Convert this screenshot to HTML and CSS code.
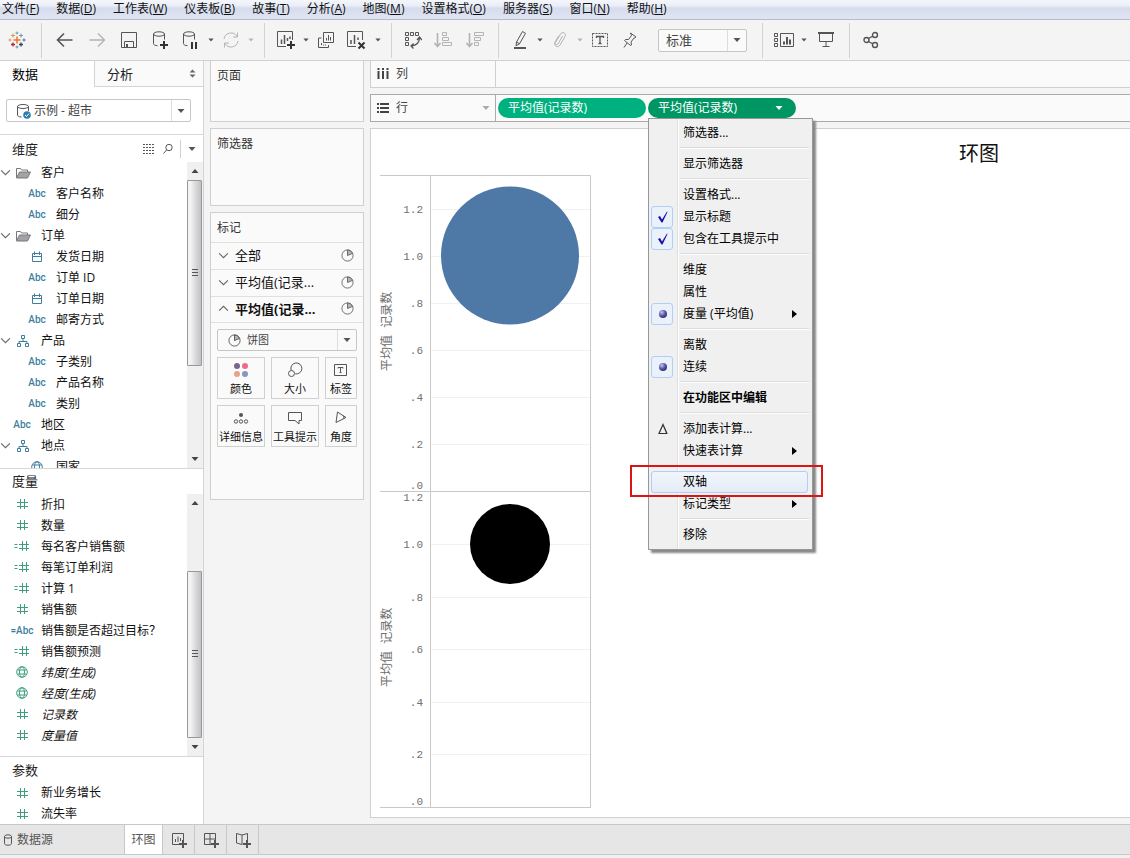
FILE: index.html
```html
<!DOCTYPE html>
<html lang="zh-CN">
<head>
<meta charset="utf-8">
<meta name="viewport" content="width=device-width, initial-scale=1">
<title>环图</title>
<link rel="stylesheet" href="styles.css">
</head>
<body>
<svg class="defs" aria-hidden="true">
  <symbol id="caret" viewBox="0 0 8 8"><path d="M.500 2h7L4 6z" fill="currentColor" stroke="none"/></symbol>
  <symbol id="up" viewBox="0 0 8 8"><path d="M.500 6h7L4 2z" fill="currentColor" stroke="none"/></symbol>
  <symbol id="chev" viewBox="0 0 10 10"><path d="M1 3l4 4 4-4"/></symbol>
  <symbol id="chevup" viewBox="0 0 10 10"><path d="M1 7l4-4 4 4"/></symbol>
  <symbol id="folder" viewBox="0 0 16 12"><path d="M1.500 10.500v-9h4l1 1.500h6v2"/><path d="M1.500 11l3-6h11l-3 6z" fill="#a0a4a8"/></symbol>
  <symbol id="cal" viewBox="0 0 12 12"><path d="M1.500 2.500h9v8h-9zM1.500 5.500h9M3.500 .500v3.500M8.500 .500v3.500"/></symbol>
  <symbol id="hier" viewBox="0 0 12 12"><path d="M4.500 .500h3v3h-3zM.500 8.500h3v3h-3zM8.500 8.500h3v3h-3zM6 3.500v3M2 8.500v-2h8v2"/></symbol>
  <symbol id="globe" viewBox="0 0 12 12"><circle cx="6" cy="6" r="5.300"/><ellipse cx="6" cy="6" rx="2.500" ry="5.300"/><path d="M1.500 4h9M1.500 8h9"/></symbol>
  <symbol id="hash" viewBox="0 0 12 12"><path d="M4.500 1v10M8.500 1v10M1 4.500h11M1 8.500h11"/></symbol>
  <symbol id="calchash" viewBox="0 0 16 12"><path d="M8.500 1v10M12.500 1v10M5 4.500h10M5 8.500h10M.500 4.500h3M.500 7.500h3"/></symbol>
  <symbol id="db" viewBox="0 0 16 18"><ellipse cx="7" cy="4.500" rx="5.500" ry="2"/><path d="M1.500 4.500V13c0 1.200 1.500 2 4 2M12.500 4.500V9"/></symbol>
  <symbol id="pie" viewBox="0 0 14 14"><circle cx="7" cy="7" r="6"/><path d="M7 7V1A6 6 0 0 1 12.500 4.700z" fill="#b5b5b5"/></symbol>
  <symbol id="grip" viewBox="0 0 8 10"><path d="M1 1.500h6M1 4.500h6M1 7.500h6"/></symbol>
</svg>
<div class="app">
  <nav class="menubar">
    <button>文件(<u>F</u>)</button><button>数据(<u>D</u>)</button><button>工作表(<u>W</u>)</button><button>仪表板(<u>B</u>)</button><button>故事(<u>T</u>)</button><button>分析(<u>A</u>)</button><button>地图(<u>M</u>)</button><button>设置格式(<u>O</u>)</button><button>服务器(<u>S</u>)</button><button>窗口(<u>N</u>)</button><button>帮助(<u>H</u>)</button>
  </nav>

  <div class="toolbar" role="toolbar" aria-label="工具栏">
    <button class="tool logo" aria-label="开始"><svg width="18" height="18" viewBox="0 0 18 18"><path d="M9 5.500v7M5.500 9h7" stroke="#e8762d" stroke-width="1.500"/><path d="M5 2.500v4M3 4.500h4" stroke="#c8a04a"/><path d="M13 2.500v4M11 4.500h4" stroke="#6a9aa8"/><path d="M5 11.500v4M3 13.500h4" stroke="#c72035" stroke-width="1.300"/><path d="M13 11.500v4M11 13.500h4" stroke="#2b4a6f" stroke-width="1.300"/><path d="M9 .500v3M7.500 2h3M9 14.500v3M7.500 16h3" stroke="#7199a6"/><path d="M2 7.500v3M.500 9h3" stroke="#e0907a"/><path d="M16 7.500v3M14.500 9h3" stroke="#5b6591"/></svg></button>
    <span class="sep"></span>
    <button class="tool wide" aria-label="后退"><svg width="20" height="18" viewBox="0 0 20 18"><path d="M2.500 9h15M9 2.500L2.500 9 9 15.500" stroke-width="1.600"/></svg></button>
    <button class="tool wide" aria-label="前进" disabled><svg width="20" height="18" viewBox="0 0 20 18"><path d="M2.500 9h15M11 2.500L17.500 9 11 15.500" stroke-width="1.400"/></svg></button>
    <button class="tool wide" aria-label="保存"><svg width="18" height="18" viewBox="0 0 18 18"><path d="M1.500 1.500h15v15h-15zM4.500 16v-5.500h9V16"/><path d="M6 13h2v3H6z" fill="currentColor" stroke="none"/></svg></button>
    <button class="tool wide" aria-label="新建数据源"><svg width="18" height="20" viewBox="0 0 18 20"><ellipse cx="7" cy="4" rx="5.500" ry="2.200"/><path d="M1.500 4v9.500c0 1.300 1.500 2 4 2.200M12.500 4v5.500"/><path class="heavy" d="M12 11v8M8 15h8"/></svg></button>
    <button class="tool" aria-label="暂停自动更新"><svg width="18" height="20" viewBox="0 0 18 20"><ellipse cx="7" cy="4" rx="5.500" ry="2.200"/><path d="M1.500 4v9.500c0 1.300 1.500 2 4 2.200M12.500 4v5.500"/><path class="heavy" d="M10 12v7M14 12v7"/></svg></button>
    <button class="drop" aria-label="更新选项"><svg width="6" height="6"><use href="#caret"/></svg></button>
    <button class="tool" aria-label="刷新" disabled><svg width="18" height="18" viewBox="0 0 18 18"><path d="M2 8a7 7 0 0 1 13-2.500M16 10a7 7 0 0 1-13 2.500M15.500 1.500v4.500H11M2.500 16.500V12H7"/></svg></button>
    <button class="drop" aria-label="刷新选项" disabled><svg width="6" height="6"><use href="#caret"/></svg></button>
    <span class="sep"></span>
    <button class="tool" aria-label="新建工作表"><svg width="20" height="20" viewBox="0 0 20 20"><path d="M10 16.500H1.500v-15h15V10"/><path d="M5.500 14V9.500M8.500 14V5M11.500 11V8M14 9V6.500" stroke-width="1.500"/><path class="heavy" d="M15 11v8M11 15h8"/></svg></button>
    <button class="drop" aria-label="新建选项"><svg width="6" height="6"><use href="#caret"/></svg></button>
    <button class="tool" aria-label="复制"><svg width="18" height="18" viewBox="0 0 18 18"><path d="M6.500 1.500h10v10h-10zM4.500 7h-3v9.500h10V14M9.500 9.500V7M11.500 9.500V4M13.500 9.500V6M4.500 14v-2M6.500 14.500v-1M8.500 14.500v-1"/></svg></button>
    <button class="tool wide" aria-label="清除工作表"><svg width="20" height="20" viewBox="0 0 20 20"><path d="M10 16.500H1.500v-15h15V10"/><path d="M5 14v-4M8.500 14V5M12 10V7.500" stroke-width="1.500"/><path class="heavy" d="M12.500 12.500l6 6M18.500 12.500l-6 6"/></svg></button>
    <button class="drop" aria-label="清除选项"><svg width="6" height="6"><use href="#caret"/></svg></button>
    <span class="sep"></span>
    <button class="tool" aria-label="交换行和列"><svg width="18" height="20" viewBox="0 0 18 20"><path d="M1.500 2.500h3v3h-3zM6.500 2.500h3v3h-3zM11.500 2.500h3v3h-3zM1.500 7.500h3v3h-3zM1.500 12.500h3v3h-3z"/><path d="M15.500 7.500c0 5-3 8-8.500 8.500M13 10l2.500-3L18 10M9.500 13.500L7 16l2.500 2.500" stroke-width="1.300"/></svg></button>
    <button class="tool wide" aria-label="升序排序" disabled><svg width="20" height="18" viewBox="0 0 20 18"><path d="M4.500 2v13M1.500 12l3 3.500 3-3.500" stroke-width="1.600"/><path d="M9.500 1.500h4v3h-4zM9.500 6.500h6v3h-6zM9.500 11.500h9v3h-9z"/></svg></button>
    <button class="tool wide" aria-label="降序排序" disabled><svg width="20" height="18" viewBox="0 0 20 18"><path d="M4.500 2v13M1.500 12l3 3.500 3-3.500" stroke-width="1.600"/><path d="M9.500 1.500h9v3h-9zM9.500 6.500h6v3h-6zM9.500 11.500h4v3h-4z"/></svg></button>
    <span class="sep"></span>
    <button class="tool" aria-label="突出显示"><svg width="14" height="20" viewBox="0 0 14 20"><path d="M3.500 12l6-10.500 3 1.800-6 10.500-3.500 2zM3.500 12l3 1.800"/><path d="M1 18h12" stroke-width="2"/></svg></button>
    <button class="drop" aria-label="突出显示选项"><svg width="6" height="6"><use href="#caret"/></svg></button>
    <button class="tool" aria-label="分组" disabled><svg width="14" height="18" viewBox="0 0 14 18"><path d="M9.500 5l-4.500 8c-1 1.800-3.500.500-2.500-1.500L7.500 3c1.800-3 6-1 4.500 2.500l-5 8.500c-2 3.500-7 1-5-3l3.500-6"/></svg></button>
    <button class="drop" aria-label="分组选项" disabled><svg width="6" height="6"><use href="#caret"/></svg></button>
    <button class="tool" aria-label="显示标记标签"><svg width="18" height="16" viewBox="0 0 18 16"><path d="M1.500 1.500h15v13h-15z" stroke-dasharray="2 1"/><path d="M5.500 6V4.500h7V6M9 4.500v7M7.500 11.500h3" stroke-width="1.300"/></svg></button>
    <button class="tool wide" aria-label="固定轴"><svg width="16" height="18" viewBox="0 0 16 18"><path d="M8.500 2l5.500 4-1.500 1h-.500l-3 4 .500 3-1 .500-6-5 1-1h3l3-4zM5 12l-3 4.500"/></svg></button>
    <span class="combo fit"><select aria-label="适合"><option>标准</option></select><svg width="8" height="8"><use href="#caret"/></svg></span>
    <span class="sep"></span>
    <button class="tool" aria-label="显示/隐藏卡"><svg width="20" height="16" viewBox="0 0 20 16"><path d="M.500 1.500h3v3h-3zM.500 6.500h3v3h-3zM.500 11.500h3v3h-3zM6.500 1.500h13v13h-13z"/><path d="M10 12.500V9.500M13 12.500V5M16 12.500V7.500" stroke-width="2"/></svg></button>
    <button class="drop" aria-label="卡选项"><svg width="6" height="6"><use href="#caret"/></svg></button>
    <button class="tool wide" aria-label="演示模式"><svg width="18" height="18" viewBox="0 0 18 18"><path d="M1 2h16" stroke-width="2"/><path d="M2.500 3v7.500h13V3M9 10.500v5M5.500 15.500h7"/></svg></button>
    <span class="sep"></span>
    <button class="tool" aria-label="共享"><svg width="16" height="18" viewBox="0 0 16 18"><g stroke-width="1.400"><circle cx="3.500" cy="9" r="2.500"/><circle cx="12" cy="4" r="2.500"/><circle cx="12" cy="14" r="2.500"/><path d="M5.500 7.500L10 5M5.500 10.500L10 13"/></g></svg></button>
  </div>

  <main class="work">
    <aside class="data">
      <div class="tabs"><button class="tab on">数据</button><button class="tab">分析<svg width="7" height="9" viewBox="0 0 7 9"><path d="M.500 3.500h6L3.500 .500zM.500 5.500h6l-3 3z" fill="#666" stroke="none"/></svg></button></div>
      <div class="source">
        <span class="combo src"><svg class="lead" width="16" height="18" viewBox="0 0 16 18"><use href="#db"/><circle cx="11" cy="13" r="3.800" fill="#2f7fae" stroke="none"/><path d="M9 13l1.500 1.500 2.500-3" stroke="#fff"/></svg><select aria-label="数据源"><option>示例 - 超市</option></select><svg width="8" height="8"><use href="#caret"/></svg></span>
      </div>
      <section class="pane dims">
        <header><h2>维度</h2>
          <button aria-label="列表视图"><svg width="12" height="12" viewBox="0 0 12 12"><path d="M0 1.500h12M0 4.500h12M0 7.500h12M0 10.500h12" stroke-dasharray="2 1"/></svg></button>
          <button aria-label="查找"><svg width="12" height="12" viewBox="0 0 12 12"><circle cx="7" cy="4.500" r="3.200"/><path d="M4.500 7L1.500 10.500"/></svg></button>
          <button class="more" aria-label="更多"><svg width="8" height="8"><use href="#caret"/></svg></button></header>
        <div class="scroll">
          <ul class="fields">
            <li class="top"><svg class="tw"><use href="#chev"/></svg><svg class="ico"><use href="#folder"/></svg>客户</li>
            <li class="sub"><i>Abc</i>客户名称</li>
            <li class="sub"><i>Abc</i>细分</li>
            <li class="top"><svg class="tw"><use href="#chev"/></svg><svg class="ico"><use href="#folder"/></svg>订单</li>
            <li class="sub"><svg class="ico blue"><use href="#cal"/></svg>发货日期</li>
            <li class="sub"><i>Abc</i>订单 ID</li>
            <li class="sub"><svg class="ico blue"><use href="#cal"/></svg>订单日期</li>
            <li class="sub"><i>Abc</i>邮寄方式</li>
            <li class="top"><svg class="tw"><use href="#chev"/></svg><svg class="ico blue"><use href="#hier"/></svg>产品</li>
            <li class="sub"><i>Abc</i>子类别</li>
            <li class="sub"><i>Abc</i>产品名称</li>
            <li class="sub"><i>Abc</i>类别</li>
            <li><i>Abc</i>地区</li>
            <li class="top"><svg class="tw"><use href="#chev"/></svg><svg class="ico blue"><use href="#hier"/></svg>地点</li>
            <li class="sub"><svg class="ico blue"><use href="#globe"/></svg>国家</li>
          </ul>
          <div class="bar"><button aria-label="向上滚动"><svg width="8" height="8"><use href="#up"/></svg></button><div class="track"><div class="thumb"><svg width="8" height="10"><use href="#grip"/></svg></div></div><button aria-label="向下滚动"><svg width="8" height="8"><use href="#caret"/></svg></button></div>
        </div>
      </section>
      <section class="pane meas">
        <header><h2>度量</h2></header>
        <div class="scroll">
          <ul class="fields">
            <li><svg class="ico green"><use href="#hash"/></svg>折扣</li>
            <li><svg class="ico green"><use href="#hash"/></svg>数量</li>
            <li><svg class="ico green"><use href="#calchash"/></svg>每名客户销售额</li>
            <li><svg class="ico green"><use href="#calchash"/></svg>每笔订单利润</li>
            <li><svg class="ico green"><use href="#calchash"/></svg>计算 1</li>
            <li><svg class="ico green"><use href="#hash"/></svg>销售额</li>
            <li><i>=Abc</i>销售额是否超过目标？</li>
            <li><svg class="ico green"><use href="#calchash"/></svg>销售额预测</li>
            <li class="gen"><svg class="ico green"><use href="#globe"/></svg>纬度(生成)</li>
            <li class="gen"><svg class="ico green"><use href="#globe"/></svg>经度(生成)</li>
            <li class="gen"><svg class="ico green"><use href="#hash"/></svg>记录数</li>
            <li class="gen"><svg class="ico green"><use href="#hash"/></svg>度量值</li>
          </ul>
          <div class="bar"><button aria-label="向上滚动"><svg width="8" height="8"><use href="#up"/></svg></button><div class="track end"><div class="thumb"><svg width="8" height="10"><use href="#grip"/></svg></div></div><button aria-label="向下滚动"><svg width="8" height="8"><use href="#caret"/></svg></button></div>
        </div>
      </section>
      <section class="pane">
        <header><h2>参数</h2></header>
        <ul class="fields">
          <li><svg class="ico green"><use href="#hash"/></svg>新业务增长</li>
          <li><svg class="ico green"><use href="#hash"/></svg>流失率</li>
        </ul>
      </section>
    </aside>

    <div class="cards">
      <section class="card pages"><h3>页面</h3></section>
      <section class="card filters"><h3>筛选器</h3></section>
      <section class="card marks"><h3>标记</h3>
        <button class="layer"><svg class="tw"><use href="#chev"/></svg><span>全部</span><svg width="13" height="13"><use href="#pie"/></svg></button>
        <button class="layer"><svg class="tw"><use href="#chev"/></svg><span>平均值(记录...</span><svg width="13" height="13"><use href="#pie"/></svg></button>
        <button class="layer on"><svg class="tw"><use href="#chevup"/></svg><span>平均值(记录...</span><svg width="13" height="13"><use href="#pie"/></svg></button>
        <div class="encode">
          <span class="combo mark"><svg class="lead" width="13" height="13"><use href="#pie"/></svg><select aria-label="标记类型"><option>饼图</option></select><svg width="8" height="8"><use href="#caret"/></svg></span>
          <button><svg width="16" height="16" viewBox="0 0 16 16"><g stroke="none"><circle cx="4" cy="4" r="3" fill="#7b6391"/><circle cx="12" cy="4" r="3" fill="#ee6a85"/><circle cx="4" cy="12" r="3" fill="#eba183"/><circle cx="12" cy="12" r="3" fill="#8795c4"/></g></svg>颜色</button>
          <button><svg width="16" height="16" viewBox="0 0 16 16"><path d="M4.200 8.300a5.500 5.500 0 1 1 4 3.500"/><circle cx="4.500" cy="11.500" r="3"/></svg>大小</button>
          <button><svg width="16" height="16" viewBox="0 0 16 16"><path d="M1.500 2.500h12v11h-12zM5 6.500V5.500h5v1M7.500 5.500v5M6.500 10.500h2"/></svg>标签</button>
          <button><svg width="16" height="16" viewBox="0 0 16 16"><circle cx="8" cy="5" r="2" fill="currentColor" stroke="none"/><circle cx="3" cy="11.500" r="1.700"/><circle cx="8" cy="11.500" r="1.700"/><circle cx="13" cy="11.500" r="1.700"/></svg>详细信息</button>
          <button><svg width="16" height="16" viewBox="0 0 16 16"><path d="M1.500 2.500h13v8h-2.500v3.500l-4-3.500H1.500z"/></svg>工具提示</button>
          <button><svg width="16" height="16" viewBox="0 0 16 16"><path d="M4.500 2L13 7.500 3 12.500zM10 5.500c1 1 1 2.500.500 3.500"/></svg>角度</button>
        </div>
      </section>
    </div>

    <div class="sheet">
      <div class="shelf"><div class="name"><svg width="12" height="12" viewBox="0 0 12 12"><path d="M1.500 0v11M6 0v11M10.500 0v11" stroke-width="2" stroke-dasharray="2 1 8"/></svg>列</div></div>
      <div class="shelf rows"><div class="name"><svg width="12" height="12" viewBox="0 0 12 12"><path d="M0 2h12M0 6h12M0 10h12" stroke-width="2" stroke-dasharray="2 1 9"/></svg>行<svg class="tail" width="8" height="8"><use href="#caret"/></svg></div>
        <div class="pills">
          <button class="pill">平均值(记录数)</button>
          <div class="anchor">
            <button class="pill open">平均值(记录数)<svg width="8" height="8"><use href="#caret"/></svg></button>
            <div class="menu" role="menu">
              <button class="item">筛选器...</button><hr>
              <button class="item">显示筛选器</button><hr>
              <button class="item">设置格式...</button>
              <label class="item"><input type="checkbox" checked><svg class="tick" width="12" height="12" viewBox="0 0 12 12"><path d="M1 6l2-1 2 3.500L10 .500l.500.500L5.500 11.500H4.500z" fill="#1414a8" stroke="none"/></svg>显示标题</label>
              <label class="item"><input type="checkbox" checked><svg class="tick" width="12" height="12" viewBox="0 0 12 12"><path d="M1 6l2-1 2 3.500L10 .500l.500.500L5.500 11.500H4.500z" fill="#1414a8" stroke="none"/></svg>包含在工具提示中</label><hr>
              <button class="item">维度</button>
              <button class="item">属性</button>
              <label class="item"><input type="radio" name="role" checked><span class="dot"></span>度量 (平均值)<span class="more"></span></label><hr>
              <button class="item">离散</button>
              <label class="item"><input type="radio" name="kind" checked><span class="dot"></span>连续</label><hr>
              <button class="item strong">在功能区中编辑</button><hr>
              <button class="item"><svg class="tick" width="12" height="12" viewBox="0 0 12 12"><path d="M6 1.500l3.800 9H2zM6 1.500l4 9" stroke="#333" stroke-width="1.200"/></svg>添加表计算...</button>
              <button class="item">快速表计算<span class="more"></span></button><hr>
              <button class="item hot">双轴<span class="callout"></span></button>
              <button class="item">标记类型<span class="more"></span></button><hr>
              <button class="item">移除</button>
            </div>
          </div>
        </div>
      </div>
      <div class="view">
        <svg class="chart" width="212" height="634" viewBox="0 0 212 634" role="img" aria-label="平均值 记录数">
          <path class="grid" d="M51 34.500h159M51 81.500h159M51 128.500h159M51 175.500h159M51 222.500h159M51 269.500h159M51 369.500h159M51 422.500h159M51 474.500h159M51 527.500h159M51 579.500h159"/>
          <path class="frame" d="M0 .500h210.500v632M0 316.500h210M0 632.500h210.500M50.500 .500v632"/>
          <circle cx="130" cy="80.500" r="69" fill="#4e79a7"/>
          <circle cx="130" cy="369" r="40"/>
          <g class="ticks"><text x="43" y="38">1.2</text><text x="43" y="85">1.0</text><text x="43" y="132">.8</text><text x="43" y="179">.6</text><text x="43" y="226">.4</text><text x="43" y="273">.2</text><text x="43" y="314">.0</text><text x="43" y="326">1.2</text><text x="43" y="373">1.0</text><text x="43" y="426">.8</text><text x="43" y="478">.6</text><text x="43" y="531">.4</text><text x="43" y="583">.2</text><text x="43" y="630">.0</text></g>
          <g class="axis"><text transform="translate(11 196) rotate(-90)">平均值 记录数</text><text transform="translate(11 512) rotate(-90)">平均值 记录数</text></g>
        </svg>
        <h1>环图</h1>
      </div>
    </div>
  </main>

  <nav class="sheets">
    <button class="ds"><svg width="10" height="12" viewBox="0 0 10 12"><ellipse cx="5" cy="2.500" rx="3.500" ry="1.700"/><path d="M1.500 2.500v7c0 2.300 7 2.300 7 0v-7"/></svg>数据源</button>
    <button class="cur">环图</button>
    <button aria-label="新建工作表"><svg width="16" height="16" viewBox="0 0 16 16"><path d="M8 12.500H1.500v-11h11V8M4.500 10V7M7 10V4.500M9.500 9V6"/><path d="M12 8v8M8 12h8" stroke-width="2"/></svg></button>
    <button aria-label="新建仪表板"><svg width="16" height="16" viewBox="0 0 16 16"><path d="M8 12.500H1.500v-11h11V8M1.500 7h11M7 1.500v11"/><path d="M12 8v8M8 12h8" stroke-width="2"/></svg></button>
    <button aria-label="新建故事"><svg width="16" height="16" viewBox="0 0 16 16"><path d="M7 12.500l-5.500-1.500V1.500L7 3l5.500-1.500V8M7 3v9.500"/><path d="M12 8v8M8 12h8" stroke-width="2"/></svg></button>
  </nav>
  <footer class="status"></footer>
</div>
</body>
</html>
```
FILE: styles.css
```css
* { box-sizing: border-box; }
body, h1, h2, h3, ul, header { margin: 0; padding: 0; }
body, button, select {
  font-family: "Open Sans", "Noto Sans CJK SC", sans-serif;
  font-size: 12px;
  line-height: 20px;
  color: #222;
  text-spacing-trim: space-all;
}
button, select { margin: 0; padding: 0; border: 0; background: none; border-radius: 0; white-space: nowrap; }
h1, h2, h3 { font-weight: 400; }
ul { list-style: none; }
svg { fill: none; stroke: currentColor; flex: none; display: block; }
.defs { position: absolute; width: 0; height: 0; }

.app { display: flex; flex-direction: column; height: 100vh; overflow: hidden; background: #f4f4f4; }

.menubar {
  display: flex; flex: none; gap: 17px; height: 20px; padding-left: 2px;
  border-bottom: 1px solid #b4bacb;
  background: linear-gradient(#f4f6fb 0, #e9edf6 6px, #d6dcec 8px, #e0e4f3 19px);
}
.menubar button { height: 18px; line-height: 18px; color: #111; }

.toolbar { display: flex; flex: none; align-items: center; height: 41px; border-bottom: 1px solid #d0d0d0; color: #555; }
.tool, .drop { display: flex; align-items: center; justify-content: center; width: 28px; height: 32px; color: #555; }
.tool.wide { width: 32px; }
.tool.logo { width: 34px; }
.drop { width: 12px; }
.tool:disabled, .drop:disabled { color: #b4b4b4; }
.heavy { stroke: #333; stroke-width: 2; }
.sep { width: 1px; height: 35px; margin: 0 7px; background: #d2d2d2; flex: none; }

.combo { display: grid; grid-template-columns: 1fr 18px; align-items: center; border: 1px solid #c6c6c6; border-radius: 2px; background: #fafafa; color: #555; }
.combo > * { grid-row: 1; }
.combo select { grid-column: 1 / 3; width: 100%; height: 100%; appearance: none; color: #444; background: linear-gradient(#ddd, #ddd) right 18px top / 1px 100% no-repeat; }
.combo > svg:last-child { grid-column: 2; justify-self: center; pointer-events: none; }
.combo .lead { grid-column: 1; pointer-events: none; }
.fit { width: 89px; height: 23px; margin: 0 8px 0 12px; }
.fit select { padding-left: 7px; font-size: 13px; }

.work { display: flex; flex: 1; min-height: 0; gap: 6px; }

.data { display: flex; flex: none; flex-direction: column; width: 204px; border-right: 1px solid #d4d4d4; background: #fff; }
.tabs { display: flex; height: 26px; flex: none; }
.tab { display: flex; align-items: center; justify-content: space-between; flex: 1; padding: 0 7px 0 12px; border: solid #d4d4d4; border-width: 0 0 1px 1px; background: #fafafa; font-size: 13px; }
.tab.on { flex: 0 0 94px; border: 0; background: #fff; color: #000; }
.source { padding: 12px 12px 12px 6px; flex: none; }
.src { height: 23px; background: #fff; }
.src .lead { margin-left: 9px; }
.src select { padding-left: 27px; color: #444; }
.pane { display: flex; flex-direction: column; border-top: 1px solid #d8d8d8; }
.pane header { display: flex; align-items: center; height: 25px; padding-left: 12px; flex: none; }
.pane h2 { flex: 1; font-size: 13px; }
.pane header button { display: grid; place-items: center; width: 19px; height: 18px; color: #555; }
.pane header .more { width: 23px; margin-left: 3px; border-left: 1px solid #d0d0d0; }
.dims { flex: 334 1 0; min-height: 0; }
.dims header { height: 27px; }
.meas { flex: 288 1 0; min-height: 0; }
.scroll { display: flex; flex: 1; min-height: 0; overflow: hidden; }
.fields { flex: 1; }
.fields li { display: grid; grid-template-columns: 34px 1fr; column-gap: 2px; align-items: center; height: 21px; padding: 0 4px 0 5px; line-height: 21px; white-space: nowrap; color: #111; }
.fields li.top { grid-template-columns: 11px 24px 1fr; padding-left: 0; column-gap: 3px; }
.fields li.sub { padding-left: 20px; }
.fields .ico { width: 16px; height: 12px; justify-self: center; }
.fields .top .ico { justify-self: start; }
.fields .top .ico { margin-left: 1px; }
.fields i { justify-self: center; font: 500 10px/21px Roboto, sans-serif; color: #3e7f9f; }
.tw { width: 11px; height: 11px; color: #666; }
.ico { color: #777; }
.ico.blue { color: #3e7f9f; }
.ico.green { color: #3f9e80; }
.gen { font-style: italic; }

.bar { display: flex; flex: none; flex-direction: column; width: 16px; background: #f0f0f0; }
.bar button { display: grid; place-items: center; width: 16px; height: 18px; color: #444; }
.track { display: flex; flex: 1; flex-direction: column; min-height: 0; }
.track.end { justify-content: flex-end; }
.thumb { display: grid; place-items: center; height: 69%; width: 15px; border: 1px solid #989898; border-radius: 1px; background: linear-gradient(90deg, #f4f4f4 20%, #dedee0 50%, #c2c2c6); color: #555; }
.end .thumb { height: 74%; }

.cards { display: flex; flex: none; flex-direction: column; gap: 6px; width: 154px; margin-top: -1px; }
.card { border: 1px solid #d0d0d0; background: #fafafa; }
.card h3 { height: 29px; padding-left: 6px; font-size: 12px; line-height: 29px; color: #333; }
.pages { height: 62px; }
.filters { height: 78px; }
.marks { min-height: 288px; }
.layer { display: flex; align-items: center; gap: 6px; width: 100%; height: 27px; padding: 0 9px 2px 7px; border-top: 1px solid #e0e0e0; font-size: 13px; color: #111; text-align: left; }
.layer span { flex: 1; }
.layer > svg { color: #666; }
.layer.on { height: 26px; font-weight: 700; }
.encode { display: grid; grid-template-columns: 48fr 48fr 32fr; gap: 6px; padding: 6px; border-top: 1px solid #e0e0e0; }
.encode > button { display: flex; flex-direction: column; align-items: center; justify-content: space-between; height: 42px; padding-top: 4px; border: 1px solid #d0d0d0; font-size: 11px; line-height: 18px; color: #111; }
.encode > button svg { color: #555; }
.mark { grid-column: 1 / 4; height: 22px; }
.mark .lead { margin-left: 10px; }
.mark select { padding-left: 29px; font-size: 11px; }

.sheet { display: flex; flex: 1; flex-direction: column; gap: 6px; min-width: 0; margin-top: -1px; padding-bottom: 6px; }
.shelf { display: flex; flex: none; height: 28px; border: 1px solid #d0d0d0; border-right: 0; background: #fafafa; }
.shelf.rows { border-color: #aaa; }
.name { display: flex; align-items: center; gap: 7px; width: 125px; padding: 0 6px; border-right: 1px solid #d0d0d0; color: #444; }
.rows .name { border-color: #aaa; }
.name .tail { margin-left: auto; margin-right: -1px; color: #aaa; }
.pills { display: flex; gap: 2px; align-items: center; padding-left: 2px; }
.anchor { position: relative; }
.pill { display: flex; align-items: center; justify-content: space-between; width: 148px; height: 20px; padding: 0 13px 0 10px; border-radius: 10px; background: #00b180; color: #fff; }
.pill.open { background: #009664; }

.menu { position: absolute; z-index: 2; top: 100%; left: 0; width: 165px; padding: 3px 2px; border: 1px solid #979797; background: linear-gradient(90deg, #f0f0f0 28px, #dfdfdf 28px, #dfdfdf 29px, #fff 29px, #fff 30px, #f0f0f0 30px); box-shadow: 3px 3px 2px #888; }
.item { position: relative; display: grid; grid-template: 20px / 21px 1fr auto; column-gap: 10px; align-items: center; width: 157px; height: 22px; line-height: 22px; border: 1px solid transparent; color: #000; text-align: left; white-space: nowrap; }
.item::before { content: ""; grid-area: 1 / 1; }
.item input { grid-area: 1 / 1; appearance: none; width: 22px; height: 22px; margin: 0 0 0 -1px; border: 1px solid #aecff7; border-radius: 3px; background: #eaf1fb; }
.tick, .dot { grid-area: 1 / 1; justify-self: center; position: relative; }
.dot { width: 8px; height: 8px; border-radius: 50%; background: radial-gradient(circle at 35% 30%, #c4c4f0, #4a4a9c 50%, #22225c); }
.item .more { border: solid transparent; border-width: 4px 0 4px 5px; border-left-color: #000; margin-right: 10px; }
.strong { font-weight: 700; }
.hot { border-color: #aecff7; border-radius: 3px; background: linear-gradient(#f2f5fa, #e4ecf7); }
.callout { position: absolute; z-index: 3; inset: -7px -16px -5px -22px; border: 2px solid #dc1414; }
.menu hr { height: 2px; margin: 3px 1px 4px 29px; border: solid; border-width: 1px 0; border-color: #dcdcdc transparent #fff; }

.view { display: flex; flex: 1; min-height: 0; padding: 46px 0 0 9px; border: 1px solid #d0d0d0; border-right: 0; background: #fff; overflow: hidden; }
.view h1 { flex: 1; margin-top: -36px; padding-right: 131px; font-size: 20px; line-height: 30px; text-align: right; color: #111; }
.chart circle:not([fill]) { fill: #000; }
.chart circle { stroke: none; }
.grid { stroke: #f0f0f0; }
.frame { stroke: #c8c8c8; }
.chart text { fill: #707070; stroke: none; }
.ticks { font: 11px "Liberation Mono", monospace; text-anchor: end; }
.axis { font: 12px "Liberation Mono", "Noto Sans CJK SC", monospace; }

.sheets { display: flex; flex: none; height: 30px; border-top: 1px solid #c8c8c8; background: #e6e6e6; }
.sheets button { display: grid; place-items: center; width: 32px; border-right: 1px solid #c8c8c8; color: #555; }
.sheets .ds { display: flex; align-items: center; gap: 4px; width: 125px; padding-left: 3px; }
.sheets .cur { width: 38px; background: #fff; }
.status { flex: none; height: 4px; border-top: 1px solid #c8c8c8; background: #f0f0f0; }
```
